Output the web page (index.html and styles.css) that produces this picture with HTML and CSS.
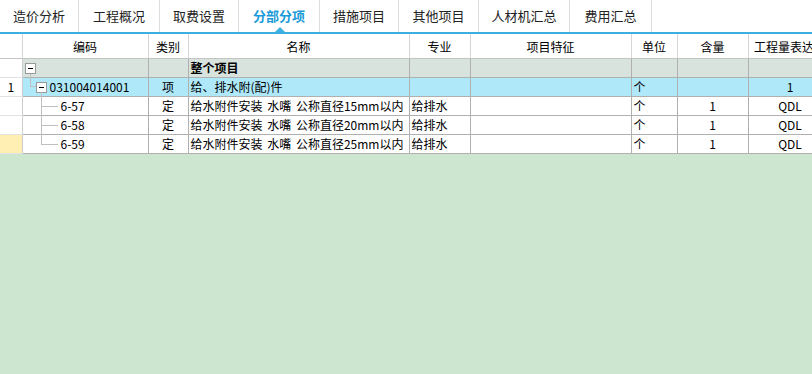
FILE: index.html
```html
<!DOCTYPE html>
<html lang="zh">
<head>
    <meta charset="utf-8">
    <link rel="stylesheet" href="styles.css">
</head>
<body>
<div id="maindiv">
    <div class="tabbar">
        <div class="tab" style="width:79px">造价分析</div>
        <div class="tab" style="width:81px">工程概况</div>
        <div class="tab" style="width:79px">取费设置</div>
        <div class="tab active" style="width:81px">分部分项</div>
        <div class="tab" style="width:79px">措施项目</div>
        <div class="tab" style="width:80px">其他项目</div>
        <div class="tab" style="width:91px">人材机汇总</div>
        <div class="tab" style="width:82px">费用汇总</div>
    </div>
    <div class="gridwrap">
        <table class="grid">
            <colgroup>
                <col style="width:22px">
                <col style="width:126px">
                <col style="width:40px">
                <col style="width:221px">
                <col style="width:61px">
                <col style="width:161px">
                <col style="width:46px">
                <col style="width:71px">
                <col style="width:84px">
            </colgroup>
            <thead>
            <tr>
                <th class="idx"></th>
                <th>编码</th>
                <th>类别</th>
                <th>名称</th>
                <th>专业</th>
                <th>项目特征</th>
                <th>单位</th>
                <th>含量</th>
                <th>工程量表达式</th>
            </tr>
            </thead>
            <tbody>
            <tr class="rootrow">
                <td class="idx"></td>
                <td class="code">
                    <div class="node lvl0"><span class="box"></span><span class="down"></span></div>
                </td>
                <td></td>
                <td class="bold">整个项目</td>
                <td></td>
                <td></td>
                <td></td>
                <td></td>
                <td></td>
            </tr>
            <tr class="selrow">
                <td class="idx">1</td>
                <td class="code">
                    <div class="node lvl1"><span class="up"></span><span class="elbow"></span><span class="box"></span><span class="down"></span>031004014001</div>
                </td>
                <td class="center">项</td>
                <td>给、排水附(配)件</td>
                <td></td>
                <td></td>
                <td>个</td>
                <td></td>
                <td class="center">1</td>
            </tr>
            <tr>
                <td class="idx"></td>
                <td class="code"><div class="node leaf"><span class="stem"></span><span class="branch"></span>6-57</div></td>
                <td class="center">定</td>
                <td class="name">给水附件安装 水嘴 公称直径15mm以内</td>
                <td>给排水</td>
                <td></td>
                <td>个</td>
                <td class="center">1</td>
                <td class="center">QDL</td>
            </tr>
            <tr>
                <td class="idx"></td>
                <td class="code"><div class="node leaf"><span class="stem"></span><span class="branch"></span>6-58</div></td>
                <td class="center">定</td>
                <td class="name">给水附件安装 水嘴 公称直径20mm以内</td>
                <td>给排水</td>
                <td></td>
                <td>个</td>
                <td class="center">1</td>
                <td class="center">QDL</td>
            </tr>
            <tr>
                <td class="idx cur"></td>
                <td class="code"><div class="node leaf last"><span class="stem"></span><span class="branch"></span>6-59</div></td>
                <td class="center">定</td>
                <td class="name">给水附件安装 水嘴 公称直径25mm以内</td>
                <td>给排水</td>
                <td></td>
                <td>个</td>
                <td class="center">1</td>
                <td class="center">QDL</td>
            </tr>
            </tbody>
        </table>
    </div>
</div>
</body>
</html>
```

FILE: styles.css
```css
html, body {
    margin: 0;
    height: 100%;
}

body {
    background-color: #cce6d0;
    font-family: "Noto Sans CJK SC", "Liberation Sans", sans-serif;
    overflow: hidden;
}

.tabbar {
    display: flex;
    height: 32px;
    background-color: #ffffff;
    border-bottom: 2px solid #3daee0;
}

.tab {
    position: relative;
    box-sizing: border-box;
    border-right: 1px solid #dddddd;
    font-size: 13px;
    line-height: 32px;
    text-align: center;
    color: #222222;
}

.tab.active {
    color: #1a9ad8;
    font-weight: bold;
}

.tab.active::after {
    content: "";
    position: absolute;
    left: 36px;
    bottom: 0;
    border-left: 5px solid transparent;
    border-right: 5px solid transparent;
    border-bottom: 5px solid #3daee0;
}

.gridwrap {
    width: 812px;
    overflow: hidden;
}

.grid {
    table-layout: fixed;
    border-collapse: collapse;
    width: 832px;
    font-size: 12px;
    color: #000000;
}

.grid th {
    height: 24px;
    padding: 0;
    font-weight: normal;
    background-color: #ffffff;
    border-left: 1px solid #d6d6d6;
    border-right: 1px solid #d6d6d6;
    border-bottom: 1px solid #c4c4c4;
    white-space: nowrap;
    overflow: hidden;
}

.grid td {
    height: 18px;
    padding: 0 2px;
    line-height: 18px;
    border: 1px solid #b0b0b0;
    white-space: nowrap;
    overflow: hidden;
    background-color: #ffffff;
}

.grid td.name {
    word-spacing: 2px;
}

.grid th:first-child, .grid td:first-child {
    border-left: none;
}

.grid td.idx {
    text-align: center;
    background-color: #ffffff;
    border-top-color: #e2e2e2;
    border-bottom-color: #e2e2e2;
    border-right-color: #cccccc;
}

.grid td.idx.cur {
    background-color: #ffefb3;
}

.rootrow td {
    background-color: #d8e3de;
}

.selrow td {
    background-color: #aee8f9;
}

.bold {
    font-weight: bold;
}

.center {
    text-align: center;
}

.grid td.code {
    padding: 0;
    overflow: visible;
}

.node {
    position: relative;
    display: flex;
    align-items: center;
    height: 18px;
}

.box {
    position: relative;
    box-sizing: border-box;
    width: 11px;
    height: 11px;
    margin-right: 3px;
    border: 1px solid #9a9a9a;
    background-color: #ffffff;
}

.box::after {
    content: "";
    position: absolute;
    left: 2px;
    top: 4px;
    width: 5px;
    height: 1px;
    background-color: #000000;
}

.lvl0 {
    padding-left: 2px;
}

.lvl1 {
    padding-left: 13px;
}

.node span.down, .node span.up, .node span.elbow, .node span.stem, .node span.branch {
    position: absolute;
    background-color: #c0c0c0;
}

.lvl0 .down {
    left: 7px;
    top: 15px;
    width: 1px;
    height: 4px;
}

.lvl1 .up {
    left: 7px;
    top: -1px;
    width: 1px;
    height: 9px;
}

.lvl1 .elbow {
    left: 7px;
    top: 8px;
    width: 6px;
    height: 1px;
}

.lvl1 .down {
    left: 18px;
    top: 14px;
    width: 1px;
    height: 5px;
}

.leaf {
    padding-left: 38px;
}

.leaf .stem {
    left: 18px;
    top: -1px;
    width: 1px;
    height: 20px;
}

.leaf.last .stem {
    height: 10px;
}

.leaf .branch {
    left: 18px;
    top: 9px;
    width: 17px;
    height: 1px;
}
```
